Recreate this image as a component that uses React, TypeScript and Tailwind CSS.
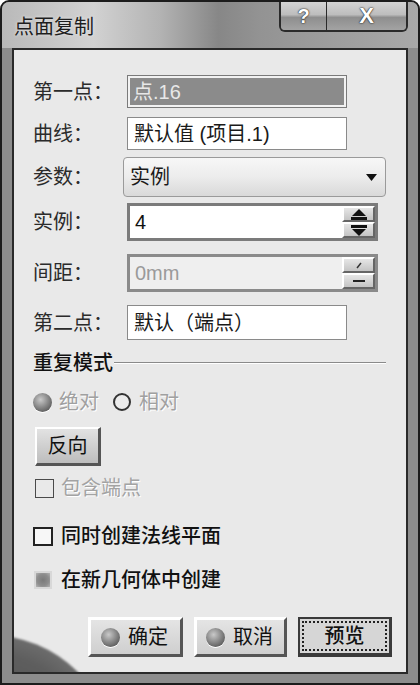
import React from 'react';

const labelCls = "w-[94px] shrink-0 text-[20px] leading-none text-[#2b2b2b]";
const sphere = "w-[19px] h-[19px] rounded-full bg-[radial-gradient(circle_at_40%_35%,#c9c9c9_0%,#8a8a8a_45%,#5a5a5a_80%,#777_100%)] shadow-[0_1px_0_#fff]";

function SpinUp({ disabled }: { disabled?: boolean }) {
  return (
    <div className="h-[18px] flex items-center justify-center bg-[linear-gradient(#e6e6e6,#c4c4c4)] border-t-2 border-l-2 border-t-white border-l-white border-b-2 border-r-2 border-b-[#666] border-r-[#666]">
      {disabled ? (
        <svg width="16" height="10" viewBox="0 0 16 10">
          <line x1="6" y1="8" x2="10" y2="3" stroke="#333" strokeWidth="1.5" />
        </svg>
      ) : (
        <svg width="18" height="11" viewBox="0 0 18 11">
          <polygon points="9,0 16,7 2,7" fill="#111" />
          <rect x="1" y="8" width="16" height="3" fill="#111" />
        </svg>
      )}
    </div>
  );
}

function SpinDown({ disabled }: { disabled?: boolean }) {
  return (
    <div className="h-[18px] flex items-center justify-center bg-[linear-gradient(#e6e6e6,#c4c4c4)] border-t-2 border-l-2 border-t-white border-l-white border-b-2 border-r-2 border-b-[#666] border-r-[#666]">
      {disabled ? (
        <svg width="18" height="10" viewBox="0 0 18 10">
          <rect x="3" y="4" width="12" height="2" fill="#222" />
        </svg>
      ) : (
        <svg width="18" height="11" viewBox="0 0 18 11">
          <rect x="1" y="0" width="16" height="3" fill="#111" />
          <polygon points="2,4 16,4 9,11" fill="#111" />
        </svg>
      )}
    </div>
  );
}

export default function App() {
  return (
    <div className="w-[420px] h-[685px] bg-[#8d8d8d] border-2 border-[#1c1c1c] rounded-t-[9px] flex flex-col overflow-hidden font-['Liberation_Sans','Noto_Sans_CJK_SC',sans-serif]">
      {/* title bar */}
      <div className="h-[46px] shrink-0 flex justify-between items-start pl-[12px] pr-[10px] bg-[linear-gradient(90deg,#b9b9b9_0%,#d2d2d2_22%,#b3b3b3_38%,#878787_52%,#939393_62%,#a9a9a9_100%)]">
        <span className="mt-[15px] text-[20px] leading-none text-[#1e1e1e] [text-shadow:0_0_3px_#eee]">点面复制</span>
        <div className="flex h-[30px] border-2 border-t-0 border-[#2a2a2a] rounded-b-[6px] overflow-hidden">
          <div className="w-[46px] flex items-center justify-center border-r border-[#2a2a2a] bg-[linear-gradient(#d4d4d4_0%,#bdbdbd_45%,#8e8e8e_55%,#a3a3a3_100%)]">
            <span className="text-[20px] font-bold leading-none text-white [text-shadow:0_0_2px_#222,0_0_1px_#000]">?</span>
          </div>
          <div className="w-[79px] flex items-center justify-center bg-[linear-gradient(#d4d4d4_0%,#bdbdbd_45%,#8e8e8e_55%,#a3a3a3_100%)]">
            <span className="text-[22px] font-bold leading-none text-white [text-shadow:0_0_2px_#222,0_0_1px_#000]">X</span>
          </div>
        </div>
      </div>

      {/* content panel */}
      <div className="relative flex-1 mx-[10px] mb-[9px] border-2 border-[#2a2a2a] bg-[#e9e9e9] overflow-hidden flex flex-col pl-[19px]">
        {/* globe decoration, bottom left */}
        <div className="absolute left-[-150px] top-[585px] w-[250px] h-[250px] rounded-full blur-[1px] bg-[radial-gradient(circle_at_50%_50%,#4a4a4a_0%,#5e5e5e_60%,#7c7c7c_82%,#b5b5b5_93%,#dcdcdc_100%)]" />

        <div className="mt-[25px] h-[33px] flex items-center">
          <span className={labelCls}>第一点：</span>
          <div className="w-[220px] h-full border border-[#7a7a7a] bg-[#8b8b8b] shadow-[inset_0_0_0_2px_#f2f2f2] flex items-center px-[5px]">
            <span className="text-[20px] leading-none text-[#e8e8e8]">点.16</span>
          </div>
        </div>

        <div className="mt-[9px] h-[33px] flex items-center">
          <span className={labelCls}>曲线：</span>
          <div className="w-[220px] h-full border border-[#8a8a8a] bg-white flex items-center px-[6px]">
            <span className="text-[20px] leading-none text-[#1a1a1a]">默认值 (项目.1)</span>
          </div>
        </div>

        <div className="mt-[7px] h-[40px] flex items-center">
          <span className={labelCls}>参数：</span>
          <div className="ml-[-4px] w-[263px] h-full border border-[#9a9a9a] rounded-[4px] bg-[linear-gradient(#f7f7f7_0%,#ececec_50%,#d9d9d9_100%)] flex items-center justify-between pl-[6px] pr-[8px]">
            <span className="text-[20px] leading-none text-[#1a1a1a]">实例</span>
            <svg width="11" height="7" viewBox="0 0 11 7">
              <polygon points="0,0 11,0 5.5,7" fill="#111" />
            </svg>
          </div>
        </div>

        <div className="mt-[6px] h-[38px] flex items-center">
          <span className={labelCls}>实例：</span>
          <div className="w-[251px] h-full border-[3px] border-[#7b7b7b] bg-white flex">
            <div className="flex-1 flex items-center px-[5px]">
              <span className="text-[20px] leading-none text-[#111]">4</span>
            </div>
            <div className="w-[33px] flex flex-col">
              <SpinUp />
              <SpinDown />
            </div>
          </div>
        </div>

        <div className="mt-[13px] h-[38px] flex items-center">
          <span className={labelCls}>间距：</span>
          <div className="w-[251px] h-full border-[3px] border-[#8a8a8a] bg-[#efefef] flex">
            <div className="flex-1 flex items-center px-[5px]">
              <span className="text-[20px] leading-none text-[#9a9a9a]">0mm</span>
            </div>
            <div className="w-[33px] flex flex-col">
              <SpinUp disabled />
              <SpinDown disabled />
            </div>
          </div>
        </div>

        <div className="mt-[13px] h-[35px] flex items-center">
          <span className={labelCls}>第二点：</span>
          <div className="w-[220px] h-full border border-[#8a8a8a] bg-white flex items-center px-[6px]">
            <span className="text-[20px] leading-none text-[#1a1a1a]">默认（端点）</span>
          </div>
        </div>

        <div className="mt-[12px] h-[22px] flex items-center">
          <span className="text-[20px] leading-none text-[#111] font-medium">重复模式</span>
          <div className="flex-1 mr-[20px] ml-[1px] h-[2px] border-t border-[#8a8a8a] border-b border-b-white" />
        </div>

        <div className="mt-[17px] h-[22px] flex items-center">
          <div className={sphere} />
          <span className="ml-[7px] text-[20px] leading-none text-[#a0a0a0] [text-shadow:1px_1px_0_#fff]">绝对</span>
          <div className="ml-[14px] w-[18px] h-[18px] rounded-full border-2 border-[#333] bg-[#ececec]" />
          <span className="ml-[8px] text-[20px] leading-none text-[#a0a0a0] [text-shadow:1px_1px_0_#fff]">相对</span>
        </div>

        <div className="mt-[14px] ml-[2px] w-[66px] h-[39px] flex items-center justify-center border-t-2 border-l-2 border-t-white border-l-white border-b-[3px] border-r-[3px] border-b-[#555] border-r-[#555] bg-[linear-gradient(#e2e2e2,#bdbdbd)]">
          <span className="text-[20px] leading-none text-[#111]">反向</span>
        </div>

        <div className="mt-[12px] h-[20px] flex items-center">
          <div className="ml-[2px] w-[19px] h-[19px] border-[1.5px] border-[#4a4a4a]" />
          <span className="ml-[7px] text-[20px] leading-none text-[#a3a3a3] [text-shadow:1px_1px_0_#fff]">包含端点</span>
        </div>

        <div className="mt-[28px] h-[20px] flex items-center">
          <div className="w-[20px] h-[19px] border-2 border-[#222] bg-[#f7f7f7]" />
          <span className="ml-[8px] text-[20px] leading-none text-[#111] font-medium">同时创建法线平面</span>
        </div>

        <div className="mt-[24px] h-[20px] flex items-center">
          <div className="ml-[1px] w-[18px] h-[18px] border-2 border-[#d8d8d8] bg-[radial-gradient(circle,#7a7a7a_0%,#8e8e8e_60%,#b4b4b4_100%)]" />
          <span className="ml-[9px] text-[20px] leading-none text-[#111] font-medium">在新几何体中创建</span>
        </div>

        <div className="relative mt-[27px] h-[40px] flex justify-end gap-[11px] pr-[14px]">
          <div className="w-[95px] h-full flex items-center gap-[8px] pl-[10px] border-t-[3px] border-l-[3px] border-t-white border-l-white border-b-[3px] border-r-[3px] border-b-[#555] border-r-[#555] bg-[linear-gradient(#e4e4e4,#cfcfcf)]">
            <div className={sphere} />
            <span className="text-[20px] leading-none text-[#111]">确定</span>
          </div>
          <div className="w-[93px] h-full flex items-center gap-[8px] pl-[9px] border-t-[3px] border-l-[3px] border-t-white border-l-white border-b-[3px] border-r-[3px] border-b-[#555] border-r-[#555] bg-[linear-gradient(#e4e4e4,#cfcfcf)]">
            <div className={sphere} />
            <span className="text-[20px] leading-none text-[#111]">取消</span>
          </div>
          <div className="w-[94px] h-full p-[2px] border-2 border-[#3a3a3a] bg-[#d6d6d6] border-b-[4px] border-r-[3px]">
            <div className="w-full h-full border-2 border-dotted border-[#222] flex items-center justify-center">
              <span className="text-[20px] leading-none text-[#111] font-medium">预览</span>
            </div>
          </div>
        </div>
      </div>
    </div>
  );
}
